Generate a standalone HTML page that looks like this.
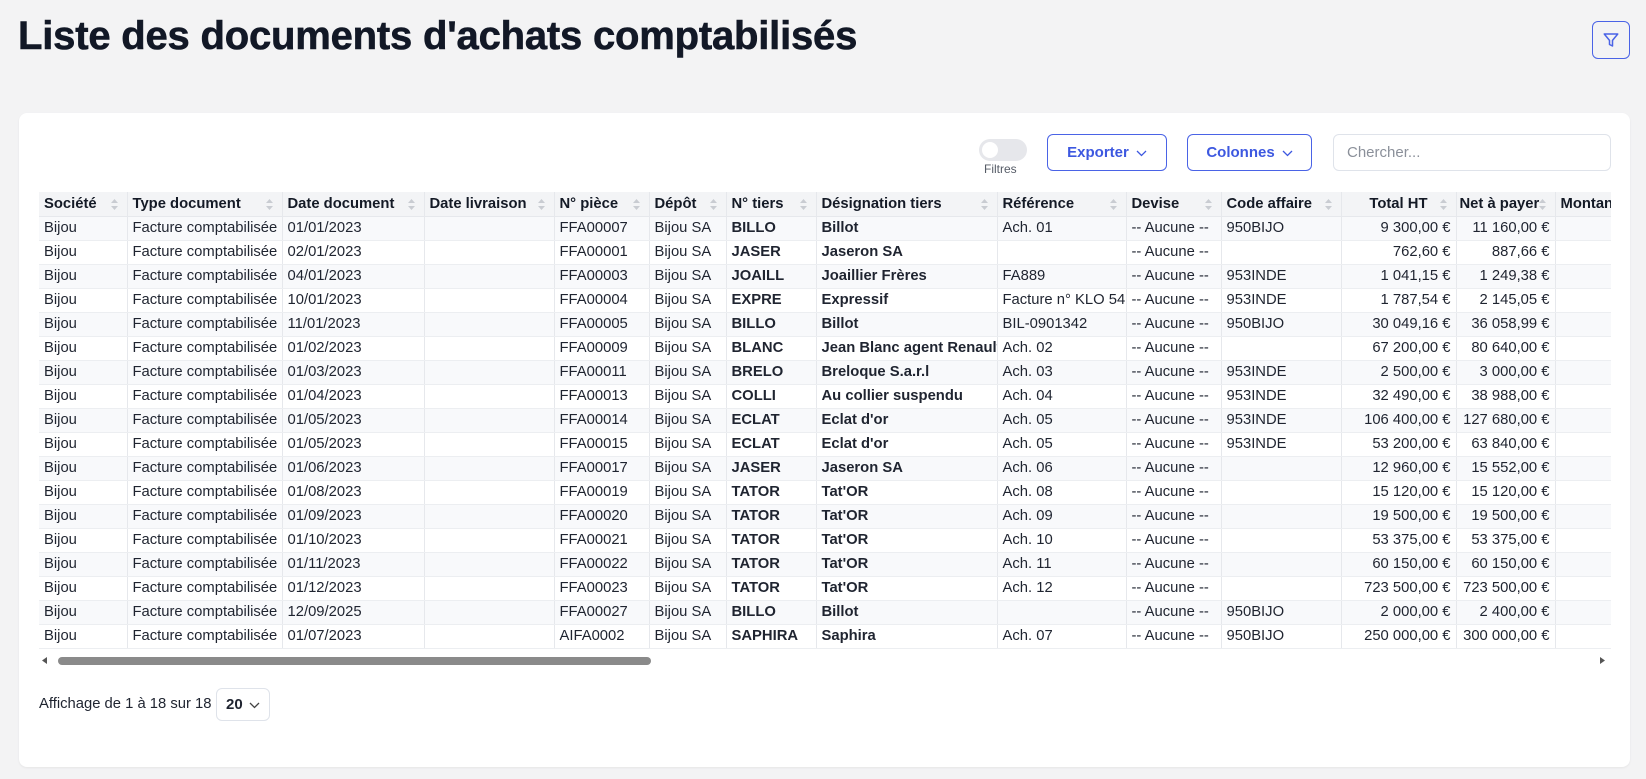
<!DOCTYPE html>
<html><head><meta charset="utf-8">
<style>
*{box-sizing:border-box;margin:0;padding:0}
body{width:1646px;height:779px;background:#f3f3f4;font-family:"Liberation Sans",sans-serif;color:#1f2430;position:relative;overflow:hidden}
h1{position:absolute;left:18px;top:14px;font-size:40px;font-weight:bold;color:#121826;letter-spacing:-0.2px;-webkit-text-stroke:0.6px #121826}
.fbtn{position:absolute;left:1592px;top:21px;width:38px;height:38px;border:1.5px solid #4a63e6;border-radius:6px;display:flex;align-items:center;justify-content:center}
.card{position:absolute;left:19px;top:113px;width:1611px;height:654px;background:#fff;border-radius:8px;box-shadow:0 1px 2px rgba(0,0,0,.06)}
.tog{position:absolute;left:979px;top:139px;width:48px;height:22px;border-radius:11px;background:#e6e7eb}
.tog:after{content:"";position:absolute;left:3px;top:3px;width:16px;height:16px;border-radius:50%;background:#fff}
.tl{position:absolute;left:984px;top:162px;font-size:12px;color:#555b66}
.btn{position:absolute;top:134px;height:37px;border:1.3px solid #4a63e6;border-radius:6px;color:#3d58e0;font-size:15px;font-weight:bold;display:flex;align-items:center;justify-content:center;gap:7px}
.btn svg{margin-top:1px}
.search{position:absolute;left:1333px;top:134px;width:278px;height:37px;border:1px solid #dfe3ea;border-radius:6px;padding-left:13px;line-height:35px;font-size:15px;color:#8b909a}
.tw{position:absolute;left:39px;top:192px;width:1572px;overflow:hidden}
table{border-collapse:collapse;table-layout:fixed;width:1630px;font-size:14.8px}
th,td{height:24px;padding:0 5px;white-space:nowrap;overflow:hidden;border-right:1px solid #e6e8ec;text-align:left}
th{background:#f3f4f6;font-weight:bold;color:#141a26;position:relative;border-bottom:1px solid #e6e8ec;padding-right:20px}
th .s{position:absolute;right:9px;top:7px;width:7px;height:11px}
tr:nth-child(odd) td{background:#f8f9fb}
td{border-bottom:1px solid #eceef1}
td.b{font-weight:bold}
td.r{text-align:right}
.sb{position:absolute;left:39px;top:653px;width:1572px;height:15px;background:#fff}
.thumb{position:absolute;left:58px;top:657px;width:593px;height:8px;border-radius:4px;background:#8a8a8a}
.foot{position:absolute;left:39px;top:696px;font-size:14.8px;color:#1f2430}
.sel{position:absolute;left:216px;top:688px;width:54px;height:33px;border:1px solid #dfe3ea;border-radius:6px;font-size:15px;font-weight:bold;padding-left:9px;line-height:31px}
</style></head><body>
<h1>Liste des documents d'achats comptabilisés</h1>
<div class="fbtn"><svg width="18" height="18" viewBox="0 0 24 24" fill="none" stroke="#4a63e6" stroke-width="2" stroke-linejoin="round"><path d="M3 4h18l-7 8.5V20l-4-2v-5.5z"/></svg></div>
<div class="card"></div>
<div class="tog"></div><div class="tl">Filtres</div>
<div class="btn" style="left:1047px;width:120px">Exporter <svg width="11" height="7" viewBox="0 0 11 7"><path d="M1 1l4.5 4.5L10 1" fill="none" stroke="#3d58e0" stroke-width="1.3"/></svg></div>
<div class="btn" style="left:1187px;width:125px">Colonnes <svg width="11" height="7" viewBox="0 0 11 7"><path d="M1 1l4.5 4.5L10 1" fill="none" stroke="#3d58e0" stroke-width="1.3"/></svg></div>
<div class="search">Chercher...</div>
<div class="tw"><table>
<colgroup><col style="width:88px"><col style="width:155px"><col style="width:142px"><col style="width:130px"><col style="width:95px"><col style="width:77px"><col style="width:90px"><col style="width:181px"><col style="width:129px"><col style="width:95px"><col style="width:120px"><col style="width:115px"><col style="width:99px"><col style="width:114px"></colgroup>
<thead><tr>
<th>Société<svg class="s" viewBox="0 0 7 11"><path d="M3.5 0L7 4H0z M3.5 11L7 7H0z" fill="#c9ccd2"/></svg></th>
<th>Type document<svg class="s" viewBox="0 0 7 11"><path d="M3.5 0L7 4H0z M3.5 11L7 7H0z" fill="#c9ccd2"/></svg></th>
<th>Date document<svg class="s" viewBox="0 0 7 11"><path d="M3.5 0L7 4H0z M3.5 11L7 7H0z" fill="#c9ccd2"/></svg></th>
<th>Date livraison<svg class="s" viewBox="0 0 7 11"><path d="M3.5 0L7 4H0z M3.5 11L7 7H0z" fill="#c9ccd2"/></svg></th>
<th>N° pièce<svg class="s" viewBox="0 0 7 11"><path d="M3.5 0L7 4H0z M3.5 11L7 7H0z" fill="#c9ccd2"/></svg></th>
<th>Dépôt<svg class="s" viewBox="0 0 7 11"><path d="M3.5 0L7 4H0z M3.5 11L7 7H0z" fill="#c9ccd2"/></svg></th>
<th>N° tiers<svg class="s" viewBox="0 0 7 11"><path d="M3.5 0L7 4H0z M3.5 11L7 7H0z" fill="#c9ccd2"/></svg></th>
<th>Désignation tiers<svg class="s" viewBox="0 0 7 11"><path d="M3.5 0L7 4H0z M3.5 11L7 7H0z" fill="#c9ccd2"/></svg></th>
<th>Référence<svg class="s" viewBox="0 0 7 11"><path d="M3.5 0L7 4H0z M3.5 11L7 7H0z" fill="#c9ccd2"/></svg></th>
<th>Devise<svg class="s" viewBox="0 0 7 11"><path d="M3.5 0L7 4H0z M3.5 11L7 7H0z" fill="#c9ccd2"/></svg></th>
<th>Code affaire<svg class="s" viewBox="0 0 7 11"><path d="M3.5 0L7 4H0z M3.5 11L7 7H0z" fill="#c9ccd2"/></svg></th>
<th style="text-align:right;padding-right:28px">Total HT<svg class="s" viewBox="0 0 7 11"><path d="M3.5 0L7 4H0z M3.5 11L7 7H0z" fill="#c9ccd2"/></svg></th>
<th style="padding-left:3px">Net à payer<svg class="s" viewBox="0 0 7 11"><path d="M3.5 0L7 4H0z M3.5 11L7 7H0z" fill="#c9ccd2"/></svg></th>
<th>Montant</th></tr></thead>
<tbody>
<tr><td>Bijou</td><td>Facture comptabilisée</td><td>01/01/2023</td><td></td><td>FFA00007</td><td>Bijou SA</td><td class="b">BILLO</td><td class="b">Billot</td><td>Ach. 01</td><td>-- Aucune --</td><td>950BIJO</td><td class="r">9 300,00 €</td><td class="r">11 160,00 €</td><td></td></tr>
<tr><td>Bijou</td><td>Facture comptabilisée</td><td>02/01/2023</td><td></td><td>FFA00001</td><td>Bijou SA</td><td class="b">JASER</td><td class="b">Jaseron SA</td><td></td><td>-- Aucune --</td><td></td><td class="r">762,60 €</td><td class="r">887,66 €</td><td></td></tr>
<tr><td>Bijou</td><td>Facture comptabilisée</td><td>04/01/2023</td><td></td><td>FFA00003</td><td>Bijou SA</td><td class="b">JOAILL</td><td class="b">Joaillier Frères</td><td>FA889</td><td>-- Aucune --</td><td>953INDE</td><td class="r">1 041,15 €</td><td class="r">1 249,38 €</td><td></td></tr>
<tr><td>Bijou</td><td>Facture comptabilisée</td><td>10/01/2023</td><td></td><td>FFA00004</td><td>Bijou SA</td><td class="b">EXPRE</td><td class="b">Expressif</td><td>Facture n° KLO 54</td><td>-- Aucune --</td><td>953INDE</td><td class="r">1 787,54 €</td><td class="r">2 145,05 €</td><td></td></tr>
<tr><td>Bijou</td><td>Facture comptabilisée</td><td>11/01/2023</td><td></td><td>FFA00005</td><td>Bijou SA</td><td class="b">BILLO</td><td class="b">Billot</td><td>BIL-0901342</td><td>-- Aucune --</td><td>950BIJO</td><td class="r">30 049,16 €</td><td class="r">36 058,99 €</td><td></td></tr>
<tr><td>Bijou</td><td>Facture comptabilisée</td><td>01/02/2023</td><td></td><td>FFA00009</td><td>Bijou SA</td><td class="b">BLANC</td><td class="b">Jean Blanc agent Renault</td><td>Ach. 02</td><td>-- Aucune --</td><td></td><td class="r">67 200,00 €</td><td class="r">80 640,00 €</td><td></td></tr>
<tr><td>Bijou</td><td>Facture comptabilisée</td><td>01/03/2023</td><td></td><td>FFA00011</td><td>Bijou SA</td><td class="b">BRELO</td><td class="b">Breloque S.a.r.l</td><td>Ach. 03</td><td>-- Aucune --</td><td>953INDE</td><td class="r">2 500,00 €</td><td class="r">3 000,00 €</td><td></td></tr>
<tr><td>Bijou</td><td>Facture comptabilisée</td><td>01/04/2023</td><td></td><td>FFA00013</td><td>Bijou SA</td><td class="b">COLLI</td><td class="b">Au collier suspendu</td><td>Ach. 04</td><td>-- Aucune --</td><td>953INDE</td><td class="r">32 490,00 €</td><td class="r">38 988,00 €</td><td></td></tr>
<tr><td>Bijou</td><td>Facture comptabilisée</td><td>01/05/2023</td><td></td><td>FFA00014</td><td>Bijou SA</td><td class="b">ECLAT</td><td class="b">Eclat d'or</td><td>Ach. 05</td><td>-- Aucune --</td><td>953INDE</td><td class="r">106 400,00 €</td><td class="r">127 680,00 €</td><td></td></tr>
<tr><td>Bijou</td><td>Facture comptabilisée</td><td>01/05/2023</td><td></td><td>FFA00015</td><td>Bijou SA</td><td class="b">ECLAT</td><td class="b">Eclat d'or</td><td>Ach. 05</td><td>-- Aucune --</td><td>953INDE</td><td class="r">53 200,00 €</td><td class="r">63 840,00 €</td><td></td></tr>
<tr><td>Bijou</td><td>Facture comptabilisée</td><td>01/06/2023</td><td></td><td>FFA00017</td><td>Bijou SA</td><td class="b">JASER</td><td class="b">Jaseron SA</td><td>Ach. 06</td><td>-- Aucune --</td><td></td><td class="r">12 960,00 €</td><td class="r">15 552,00 €</td><td></td></tr>
<tr><td>Bijou</td><td>Facture comptabilisée</td><td>01/08/2023</td><td></td><td>FFA00019</td><td>Bijou SA</td><td class="b">TATOR</td><td class="b">Tat'OR</td><td>Ach. 08</td><td>-- Aucune --</td><td></td><td class="r">15 120,00 €</td><td class="r">15 120,00 €</td><td></td></tr>
<tr><td>Bijou</td><td>Facture comptabilisée</td><td>01/09/2023</td><td></td><td>FFA00020</td><td>Bijou SA</td><td class="b">TATOR</td><td class="b">Tat'OR</td><td>Ach. 09</td><td>-- Aucune --</td><td></td><td class="r">19 500,00 €</td><td class="r">19 500,00 €</td><td></td></tr>
<tr><td>Bijou</td><td>Facture comptabilisée</td><td>01/10/2023</td><td></td><td>FFA00021</td><td>Bijou SA</td><td class="b">TATOR</td><td class="b">Tat'OR</td><td>Ach. 10</td><td>-- Aucune --</td><td></td><td class="r">53 375,00 €</td><td class="r">53 375,00 €</td><td></td></tr>
<tr><td>Bijou</td><td>Facture comptabilisée</td><td>01/11/2023</td><td></td><td>FFA00022</td><td>Bijou SA</td><td class="b">TATOR</td><td class="b">Tat'OR</td><td>Ach. 11</td><td>-- Aucune --</td><td></td><td class="r">60 150,00 €</td><td class="r">60 150,00 €</td><td></td></tr>
<tr><td>Bijou</td><td>Facture comptabilisée</td><td>01/12/2023</td><td></td><td>FFA00023</td><td>Bijou SA</td><td class="b">TATOR</td><td class="b">Tat'OR</td><td>Ach. 12</td><td>-- Aucune --</td><td></td><td class="r">723 500,00 €</td><td class="r">723 500,00 €</td><td></td></tr>
<tr><td>Bijou</td><td>Facture comptabilisée</td><td>12/09/2025</td><td></td><td>FFA00027</td><td>Bijou SA</td><td class="b">BILLO</td><td class="b">Billot</td><td></td><td>-- Aucune --</td><td>950BIJO</td><td class="r">2 000,00 €</td><td class="r">2 400,00 €</td><td></td></tr>
<tr><td>Bijou</td><td>Facture comptabilisée</td><td>01/07/2023</td><td></td><td>AIFA0002</td><td>Bijou SA</td><td class="b">SAPHIRA</td><td class="b">Saphira</td><td>Ach. 07</td><td>-- Aucune --</td><td>950BIJO</td><td class="r">250 000,00 €</td><td class="r">300 000,00 €</td><td></td></tr>
</tbody></table></div>
<div class="sb"><svg style="position:absolute;left:3px;top:4px" width="5" height="7" viewBox="0 0 5 7"><path d="M5 0v7L0 3.5z" fill="#555"/></svg><svg style="position:absolute;right:6px;top:4px" width="5" height="7" viewBox="0 0 5 7"><path d="M0 0v7L5 3.5z" fill="#555"/></svg></div>
<div class="thumb"></div>
<div class="foot">Affichage de 1 à 18 sur 18</div>
<div class="sel">20 <svg style="position:absolute;right:9px;top:13px" width="11" height="7" viewBox="0 0 11 7"><path d="M1 1l4.5 4.5L10 1" fill="none" stroke="#444" stroke-width="1.3"/></svg></div>
</body></html>
